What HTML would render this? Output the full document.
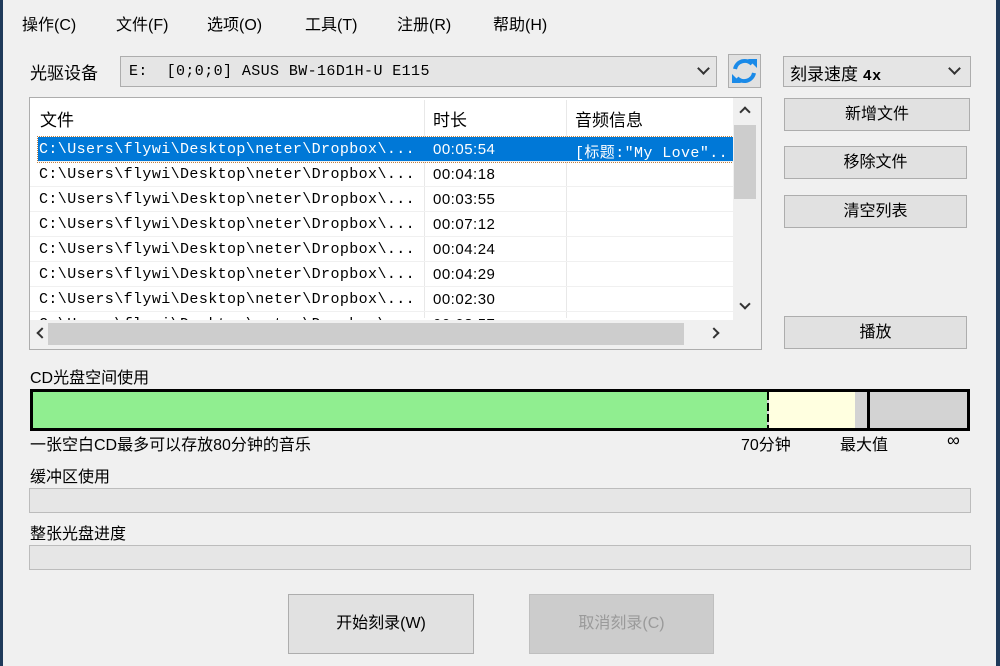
<!DOCTYPE html>
<html><head><meta charset="utf-8"><style>
*{box-sizing:border-box;margin:0;padding:0}
body{width:1000px;height:666px;background:#f0f0f0;position:relative;overflow:hidden;font-family:"Liberation Sans","Noto Sans CJK SC",sans-serif;font-size:16px;color:#000}
.a{position:absolute}
.edge{position:absolute;top:0;bottom:0;width:3px;background:#1f3a5a}
.menu span{position:absolute;top:11px;font-size:16px}
.combo{position:absolute;background:#e5e5e5;border:1px solid #adadad}
.chev{position:absolute;width:9px;height:9px;border-right:2px solid #333;border-bottom:2px solid #333;transform:rotate(45deg)}
.btn{position:absolute;background:#e1e1e1;border:1px solid #adadad;text-align:center;font-size:16px}
.mono{font-family:"Liberation Mono","Noto Sans CJK SC",monospace;font-size:15px;letter-spacing:0.4px}
.row{position:absolute;left:0;width:703px;height:25px;border-bottom:1px solid #f0f0f0}
.row span{position:absolute;top:4px}
.c1{left:9px}.c2{left:403px;font-family:"Liberation Sans",sans-serif;font-size:15px;letter-spacing:0.5px}.c3{left:545px}
.prog{position:absolute;left:29px;width:942px;height:25px;background:#e6e6e6;border:1px solid #bcbcbc}
.lbl{position:absolute;font-size:16px}
</style></head><body>
<div class="edge" style="left:0"></div>
<div class="edge" style="left:996px;width:4px"></div>
<div class="menu">
<span style="left:22px">操作(C)</span><span style="left:116px">文件(F)</span><span style="left:207px">选项(O)</span><span style="left:305px">工具(T)</span><span style="left:397px">注册(R)</span><span style="left:493px">帮助(H)</span>
</div>
<div class="lbl" style="left:30px;top:59px;font-size:17px">光驱设备</div>
<div class="combo" style="left:120px;top:56px;width:597px;height:31px"><span class="a mono" style="left:8px;top:6px">E:&nbsp; [0;0;0] ASUS BW-16D1H-U E115</span><div class="chev" style="left:578px;top:7px"></div></div>
<div class="a" style="left:728px;top:54px;width:33px;height:34px;background:#e1e1e1;border:1px solid #adadad">
<svg width="31" height="32" viewBox="0 0 31 32"><g fill="none" stroke="#1a8ae8" stroke-width="4"><path d="M6 14 A10 10 0 0 1 23 9"/><path d="M25 18 A10 10 0 0 1 8 23"/></g><path d="M19 4 L28 4 L28 13 Z" fill="#1a8ae8"/><path d="M3 19 L12 28 L3 28 Z" fill="#1a8ae8"/></svg></div>
<div class="combo" style="left:783px;top:56px;width:188px;height:31px"><span class="a" style="left:6px;top:3px;font-size:17px">刻录速度 <span class="mono" style="font-weight:bold;font-size:15px">4x</span></span><div class="chev" style="left:166px;top:7px"></div></div>

<div class="a" style="left:29px;top:97px;width:733px;height:253px;background:#fff;border:1px solid #adadad;overflow:hidden">
<div class="a" style="left:394px;top:2px;width:1px;height:218px;background:#e8e8e8"></div>
<div class="a" style="left:536px;top:2px;width:1px;height:218px;background:#e8e8e8"></div>
<div class="a" style="left:10px;top:8px;font-size:17px">文件</div>
<div class="a" style="left:403px;top:8px;font-size:17px">时长</div>
<div class="a" style="left:545px;top:8px;font-size:17px">音频信息</div>
<div class="mono">
<div class="row" style="top:39px;background:#0078d7;color:#fff;left:8px;width:695px;outline:1px dotted #c08040"><span style="left:1px">C:\Users\flywi\Desktop\neter\Dropbox\...</span><span style="left:395px;font-family:'Liberation Sans',sans-serif;font-size:15px;letter-spacing:.5px">00:05:54</span><span style="left:537px">[标题:"My Love"..</span></div>
<div class="row" style="top:64px"><span class="c1">C:\Users\flywi\Desktop\neter\Dropbox\...</span><span class="c2">00:04:18</span></div>
<div class="row" style="top:89px"><span class="c1">C:\Users\flywi\Desktop\neter\Dropbox\...</span><span class="c2">00:03:55</span></div>
<div class="row" style="top:114px"><span class="c1">C:\Users\flywi\Desktop\neter\Dropbox\...</span><span class="c2">00:07:12</span></div>
<div class="row" style="top:139px"><span class="c1">C:\Users\flywi\Desktop\neter\Dropbox\...</span><span class="c2">00:04:24</span></div>
<div class="row" style="top:164px"><span class="c1">C:\Users\flywi\Desktop\neter\Dropbox\...</span><span class="c2">00:04:29</span></div>
<div class="row" style="top:189px"><span class="c1">C:\Users\flywi\Desktop\neter\Dropbox\...</span><span class="c2">00:02:30</span></div>
<div class="row" style="top:214px;height:9px;overflow:hidden"><span class="c1">C:\Users\flywi\Desktop\neter\Dropbox\...</span><span class="c2">00:03:57</span></div>
</div>
<div class="a" style="left:703px;top:0;width:28px;height:223px;background:#f0f0f0"></div>
<div class="a" style="left:704px;top:27px;width:22px;height:74px;background:#cdcdcd"></div>
<div class="chev" style="left:711px;top:10px;transform:rotate(225deg);width:8px;height:8px"></div>
<div class="chev" style="left:711px;top:202px;width:8px;height:8px"></div>
<div class="a" style="left:0;top:223px;width:731px;height:28px;background:#f0f0f0"></div>
<div class="a" style="left:18px;top:225px;width:636px;height:22px;background:#cdcdcd"></div>
<div class="chev" style="left:8px;top:231px;transform:rotate(135deg);width:8px;height:8px"></div>
<div class="chev" style="left:680px;top:231px;transform:rotate(-45deg);width:8px;height:8px"></div>
</div>

<div class="btn" style="left:784px;top:98px;width:186px;height:33px;line-height:31px">新增文件</div>
<div class="btn" style="left:784px;top:146px;width:183px;height:33px;line-height:31px">移除文件</div>
<div class="btn" style="left:784px;top:195px;width:183px;height:33px;line-height:31px">清空列表</div>
<div class="btn" style="left:784px;top:316px;width:183px;height:33px;line-height:31px">播放</div>

<div class="lbl" style="left:30px;top:364px">CD光盘空间使用</div>
<div class="a" style="left:30px;top:389px;width:940px;height:42px;border:3px solid #000;background:#d3d3d3">
<div class="a" style="left:0;top:0;width:734px;height:36px;background:#90ee90"></div>
<div class="a" style="left:734px;top:0;width:2px;height:36px;background:repeating-linear-gradient(#000 0 8px,transparent 8px 11px)"></div>
<div class="a" style="left:736px;top:0;width:86px;height:36px;background:#ffffe0"></div>
<div class="a" style="left:834px;top:0;width:3px;height:36px;background:#000"></div>
</div>
<div class="lbl" style="left:30px;top:431px">一张空白CD最多可以存放80分钟的音乐</div>
<div class="lbl" style="left:741px;top:431px">70分钟</div>
<div class="lbl" style="left:840px;top:431px">最大值</div>
<div class="lbl" style="left:947px;top:430px;font-size:18px">∞</div>

<div class="lbl" style="left:30px;top:463px">缓冲区使用</div>
<div class="prog" style="top:488px"></div>
<div class="lbl" style="left:30px;top:520px">整张光盘进度</div>
<div class="prog" style="top:545px"></div>

<div class="btn" style="left:288px;top:594px;width:186px;height:60px;line-height:58px">开始刻录(W)</div>
<div class="btn" style="left:529px;top:594px;width:185px;height:60px;line-height:58px;background:#cccccc;border-color:#bfbfbf;color:#9a9a9a">取消刻录(C)</div>
</body></html>
